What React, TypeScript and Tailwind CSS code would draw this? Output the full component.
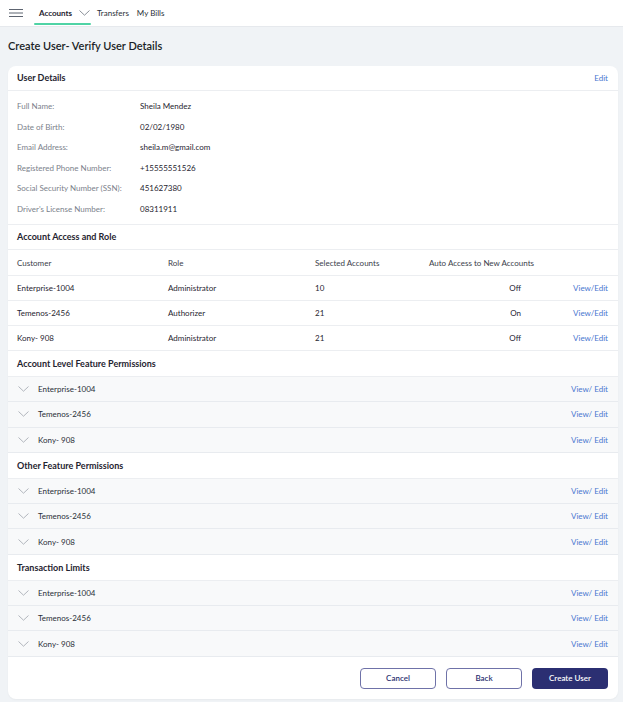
import React from "react";

const details = [
  ["Full Name:", "Sheila Mendez"],
  ["Date of Birth:", "02/02/1980"],
  ["Email Address:", "sheila.m@gmail.com"],
  ["Registered Phone Number:", "+15555551526"],
  ["Social Security Number (SSN):", "451627380"],
  ["Driver's License Number:", "08311911"],
];

const access = [
  ["Enterprise-1004", "Administrator", "10", "Off"],
  ["Temenos-2456", "Authorizer", "21", "On"],
  ["Kony- 908", "Administrator", "21", "Off"],
];

const customers = ["Enterprise-1004", "Temenos-2456", "Kony- 908"];

function Chevron({ className = "" }: { className?: string }) {
  return (
    <svg width="11" height="6" viewBox="0 0 11 6" fill="none" className={className}>
      <path d="M0.5 0.5L5.5 5.2L10.5 0.5" stroke="currentColor" strokeWidth="0.9" />
    </svg>
  );
}

function SectionHeader({ title, edit }: { title: string; edit?: boolean }) {
  return (
    <div className="h-[26px] flex items-center justify-between pl-[9px] pr-[10px] border-b border-[#eceef1]">
      <span className="text-[9px] font-bold text-[#1f2430]">{title}</span>
      {edit && <span className="text-[8px] text-[#4a78d0]">Edit</span>}
    </div>
  );
}

function AccordionList() {
  return (
    <div>
      {customers.map((c) => (
        <div
          key={c}
          className="h-[25.3px] flex items-center pl-[10px] pr-[10px] bg-[#f8f9fa] border-b border-[#e8ebef]"
        >
          <Chevron className="text-[#a9aeb6]" />
          <span className="ml-[9px] text-[8px] text-[#2a2f38]">{c}</span>
          <span className="ml-auto text-[8px] text-[#4a78d0]">View/ Edit</span>
        </div>
      ))}
    </div>
  );
}

export default function App() {
  return (
    <div
      className="min-h-[702px] bg-[#f0f3f6] text-[#1f2430]"
      style={{ fontFamily: "Lato, 'Noto Sans', sans-serif" }}
    >
      {/* Top nav */}
      <div className="h-[27px] bg-white border-b border-[#e6e9ed] flex items-stretch">
        <div className="w-[34px] flex items-center pl-[9px]">
          <svg width="14" height="8" viewBox="0 0 14 8">
            <path d="M0 0.5H14M0 4H14M0 7.5H14" stroke="#5d6470" strokeWidth="1" />
          </svg>
        </div>
        <div className="relative w-[57px] flex items-center pl-[5px]">
          <span className="text-[8px] font-bold text-[#1f2430]">Accounts</span>
          <Chevron className="ml-[7px] text-[#7d838d]" />
          <div className="absolute left-0 right-0 bottom-[1px] h-[2px] bg-[#4fd3a5] rounded" />
        </div>
        <div className="flex items-center ml-[6px] text-[8px] text-[#2a2f38]">Transfers</div>
        <div className="flex items-center ml-[8px] text-[8px] text-[#2a2f38]">My Bills</div>
      </div>

      <div className="pl-[8px] pr-[5px]">
        <h1 className="pt-[11px] mb-[12px] leading-[16px] text-[11px] font-semibold text-[#1b1f27]">
          Create User- Verify User Details
        </h1>

        <div className="bg-white rounded-[8px] overflow-hidden shadow-[0_1px_2px_rgba(0,0,0,0.04)]">
          <div className="h-[25px] flex items-center justify-between pl-[9px] pr-[10px] border-b border-[#eceef1]">
            <span className="text-[9px] font-bold text-[#1f2430]">User Details</span>
            <span className="text-[8px] text-[#4a78d0]">Edit</span>
          </div>

          <div className="pt-[5px] pb-[5px] pl-[9px] border-b border-[#eceef1]">
            {details.map(([k, v]) => (
              <div key={k} className="h-[20.5px] flex items-center text-[8px]">
                <span className="w-[123px] text-[#7b818b]">{k}</span>
                <span className="text-[#1f2430]">{v}</span>
              </div>
            ))}
          </div>

          <div className="h-[25px] flex items-center pl-[9px] border-b border-[#eceef1]">
            <span className="text-[9px] font-bold text-[#1f2430]">Account Access and Role</span>
          </div>

          <div className="h-[26px] flex items-center pl-[9px] pr-[10px] border-b border-[#eceef1] text-[8px] text-[#3a404a] whitespace-nowrap">
            <span className="w-[151px]">Customer</span>
            <span className="w-[147px]">Role</span>
            <span className="w-[114px]">Selected Accounts</span>
            <span className="w-[92px]">Auto Access to New Accounts</span>
          </div>
          {access.map(([c, r, s, a]) => (
            <div
              key={c}
              className="h-[25px] flex items-center pl-[9px] pr-[10px] border-b border-[#eceef1] text-[8px] text-[#1f2430]"
            >
              <span className="w-[151px]">{c}</span>
              <span className="w-[147px]">{r}</span>
              <span className="w-[114px]">{s}</span>
              <span className="w-[92px] text-right">{a}</span>
              <span className="ml-auto text-[#4a78d0]">View/Edit</span>
            </div>
          ))}

          <SectionHeader title="Account Level Feature Permissions" />
          <AccordionList />
          <SectionHeader title="Other Feature Permissions" />
          <AccordionList />
          <SectionHeader title="Transaction Limits" />
          <AccordionList />

          <div className="pt-[11px] pb-[10px] pr-[10px] flex justify-end gap-[10px]">
            <button className="w-[76px] h-[21px] rounded-[4px] border border-[#6f72a8] text-[8px] font-semibold text-[#2c3070] bg-white">
              Cancel
            </button>
            <button className="w-[76px] h-[21px] rounded-[4px] border border-[#6f72a8] text-[8px] font-semibold text-[#2c3070] bg-white">
              Back
            </button>
            <button className="w-[76px] h-[21px] rounded-[4px] bg-[#2b2f72] text-[8px] font-semibold text-white">
              Create User
            </button>
          </div>
        </div>
      </div>
    </div>
  );
}
